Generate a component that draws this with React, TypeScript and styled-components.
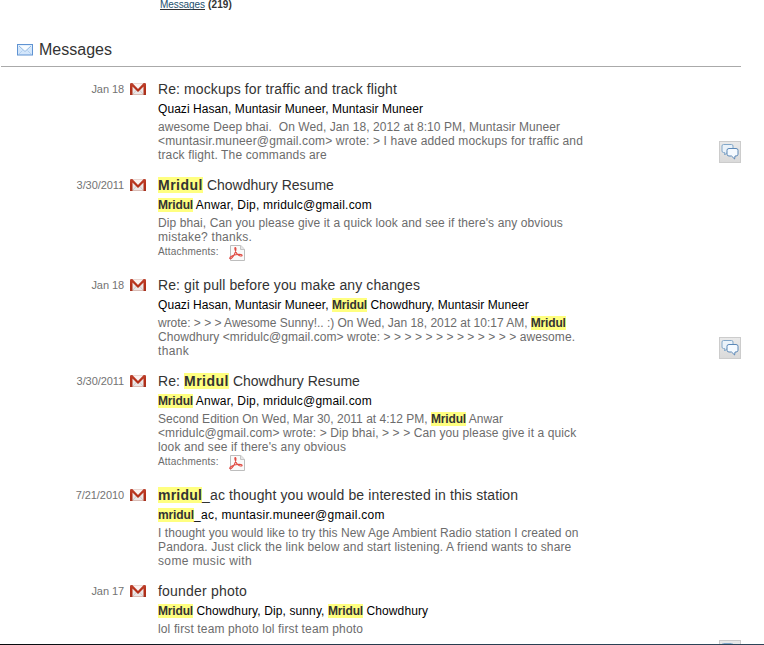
import React from "react";
import styled, { createGlobalStyle } from "styled-components";

const GlobalStyle = createGlobalStyle`
  body {
    margin: 0;
    background: #fff;
    font-family: "Liberation Sans", Arial, sans-serif;
    overflow: hidden;
  }
`;

const Page = styled.div`
  display: flex;
  flex-direction: column;
  height: 645px;
  overflow: hidden;
`;

const Content = styled.main`
  flex: 1;
  min-height: 0;
  overflow: hidden;
`;

const Crumb = styled.div`
  display: flex;
  gap: 3px;
  height: 40px;
  padding-left: 160px;
  box-sizing: border-box;
  font-size: 10px;
  line-height: 10px;
  color: #333;
`;

const CrumbLink = styled.a`
  height: 10px;
  border-bottom: 1px solid #333;
  box-sizing: border-box;
  font-size: 10px;
  letter-spacing: -0.07px;
  color: #24506e;
  text-decoration: none;
`;

const Count = styled.strong`
  letter-spacing: 0.13px;
`;

const Heading = styled.h1`
  display: flex;
  align-items: center;
  gap: 6px;
  width: 740px;
  height: 27px;
  margin: 0 0 12px 1px;
  padding: 0 0 6px 16px;
  box-sizing: border-box;
  border-bottom: 1px solid #aaa;
  color: #333;
  font-size: 16px;
  font-weight: normal;
  line-height: 20px;
`;

const Row = styled.article`
  display: grid;
  grid-template-columns: 124px 16px 500px 22px;
  column-gap: 0;
  padding-bottom: 13px;
`;

const DateLabel = styled.time`
  color: #737373;
  font-size: 11px;
  line-height: 20px;
  letter-spacing: -0.08px;
  text-align: right;
`;

const Source = styled.div`
  padding: 4px 0 0 6px;
  svg {
    display: block;
  }
`;

const Body = styled.div`
  padding-left: 18px;
  white-space: pre;
`;

const Title = styled.h2`
  margin: 0;
  height: 20px;
  color: #333;
  font-size: 14px;
  font-weight: normal;
  line-height: 20px;
`;

const People = styled.div`
  height: 21px;
  color: #000;
  font-size: 12px;
  line-height: 20px;
`;

const SnippetLine = styled.div`
  height: 14px;
  color: #6c6c6c;
  font-size: 12px;
  line-height: 14px;
`;

const Text = styled.span<{ $tracking: number }>`
  letter-spacing: ${(p) => p.$tracking}px;
`;

const Highlight = styled(Text)`
  background: #ffff80;
  color: #333;
  font-weight: bold;
`;

const Attachments = styled.div`
  display: flex;
  gap: 7px;
  height: 18px;
  color: #6c6c6c;
  font-size: 10px;
  line-height: 15px;
  letter-spacing: 0.2px;
  svg {
    margin-top: 1px;
  }
`;

const ChatButton = styled.button<{ $offset: number }>`
  display: grid;
  place-items: center;
  width: 22px;
  height: 22px;
  margin: ${(p) => p.$offset}px 0 -22px 79px;
  padding: 0;
  border: 1px solid #ccc;
  background: linear-gradient(#e9e9e9, #dadada);
`;

const Edge = styled.footer`
  height: 1px;
  background: linear-gradient(90deg, #080a0c, #101820 20%, #26384a 35%, #2d4559);
`;

const Envelope = () => (
  <svg width="16" height="12" viewBox="0 0 16 12">
    <rect x="0.5" y="0.5" width="15" height="10.500" fill="#d3e6fb" stroke="#5f93d2" />
    <path d="M1.500 1.500h13v1L8 8 1.500 2.500z" fill="#f8fcff" />
    <path d="M2 2l6 5.500L14 2" fill="none" stroke="#8eb7e3" />
    <path d="M2 10l3.500-3.500M14 10l-3.500-3.500" fill="none" stroke="#b2d0ef" />
  </svg>
);

const Gmail = () => (
  <svg width="16" height="12" viewBox="0 0 16 12">
    <defs>
      <linearGradient id="mail-red" x1="0" y1="0" x2="0" y2="1">
        <stop offset="0" stopColor="#bd432f" />
        <stop offset="0.500" stopColor="#b52e17" />
        <stop offset="1" stopColor="#a7331f" />
      </linearGradient>
    </defs>
    <rect x="0.5" y="0.5" width="15" height="11" rx="0.7" fill="#ece7e7" stroke="#d9bcb5" />
    <path d="M3 11l4-4.500M13 11L9 6.500" stroke="#cfcaca" fill="none" />
    <path d="M2.500 0.500h11L8 5.500z" fill="#fbf3f2" />
    <path
      d="M0 1.200Q0 0 1.500 0h.8L8 5.900 13.700 0h.8Q16 0 16 1.200V12h-2.500V3.600L8 8.900 2.500 3.600V12H0z"
      fill="url(#mail-red)"
    />
  </svg>
);

const Pdf = () => (
  <svg width="16" height="16" viewBox="0 0 16 16">
    <path d="M1.500 0.500h10.300l3.700 3.700v11.300h-14z" fill="#fafafa" stroke="#bdbdbd" />
    <path d="M11.500 0.500v4h4" fill="#e7e7e7" stroke="#c5c5c5" />
    <path
      d="M6.200 2.500c1.500 0 .6 5-1.700 8.500C3.100 13.200 1 14.500.7 13.400c-.3-1.500 3.900-3.500 7.400-3.900 3.400-.4 5.200.2 5 1-.2 1.200-3.200.3-4.700-1.200C6.500 7.300 5.200 2.500 6.200 2.500z"
      fill="none"
      stroke="#e04a42"
      strokeWidth="1.100"
    />
  </svg>
);

const Bubbles = () => (
  <svg width="18" height="18" viewBox="0 0 18 18">
    <path
      d="M2.500 1.500h8q1.500 0 1.500 1.500v5q0 1.500-1.500 1.500H6L3.700 12V9.500H2.500Q1 9.500 1 8V3q0-1.500 1.500-1.500z"
      fill="#eaf2f9"
      stroke="#82a7c9"
    />
    <path
      d="M8 5.500h7q2 0 2 1.700v4q0 1.800-2 1.800h-1l-.4 3L10.500 13H8q-2 0-2-1.800v-4Q6 5.500 8 5.500z"
      fill="#f5faff"
      stroke="#5b88b7"
    />
  </svg>
);

type Segment = [text: string, tracking: number, highlighted?: boolean];
type Message = {
  date: string;
  title: Segment[];
  people: Segment[];
  snippet: Segment[][];
  attachment?: boolean;
  chatOffset?: number;
};

const name: Segment = ["Mridul", -0.166, true];
const bigName: Segment = ["Mridul", 0.5, true];

const messages: Message[] = [
  {
    date: "Jan 18",
    title: [["Re: mockups for traffic and track flight", 0.107]],
    people: [["Quazi Hasan, Muntasir Muneer, Muntasir Muneer", 0.064]],
    snippet: [
      [["awesome Deep bhai.  On Wed, Jan 18, 2012 at 8:10 PM, Muntasir Muneer", 0.069]],
      [["<muntasir.muneer@gmail.com> wrote: > I have added mockups for traffic and", 0.153]],
      [["track flight. The commands are", 0.142]],
    ],
    chatOffset: 62,
  },
  {
    date: "3/30/2011",
    title: [bigName, [" Chowdhury Resume", 0.01]],
    people: [name, [" Anwar, Dip, mridulc@gmail.com", 0.2]],
    snippet: [
      [["Dip bhai, Can you please give it a quick look and see if there's any obvious", 0.1]],
      [["mistake? thanks.", 0.247]],
    ],
    attachment: true,
  },
  {
    date: "Jan 18",
    title: [["Re: git pull before you make any changes", 0.11]],
    people: [["Quazi Hasan, Muntasir Muneer, ", 0.064], name, [" Chowdhury, Muntasir Muneer", 0.075]],
    snippet: [
      [["wrote: > > > Awesome Sunny!.. :) On Wed, Jan 18, 2012 at 10:17 AM, ", -0.02], name],
      [["Chowdhury <mridulc@gmail.com> wrote: > > > > > > > > > > > > > awesome.", 0.07]],
      [["thank", 0.329]],
    ],
    chatOffset: 62,
  },
  {
    date: "3/30/2011",
    title: [["Re: ", 0.08], bigName, [" Chowdhury Resume", 0.01]],
    people: [name, [" Anwar, Dip, mridulc@gmail.com", 0.2]],
    snippet: [
      [["Second Edition On Wed, Mar 30, 2011 at 4:12 PM, ", 0.013], name, [" Anwar", 0.05]],
      [["<mridulc@gmail.com> wrote: > Dip bhai, > > > Can you please give it a quick", 0.105]],
      [["look and see if there's any obvious", 0.122]],
    ],
    attachment: true,
  },
  {
    date: "7/21/2010",
    title: [["mridul", 0.22, true], ["_ac thought you would be interested in this station", 0.108]],
    people: [["mridul", -0.111, true], ["_ac, muntasir.muneer@gmail.com", 0.285]],
    snippet: [
      [["I thought you would like to try this New Age Ambient Radio station I created on", 0.062]],
      [["Pandora. Just click the link below and start listening. A friend wants to share", 0.142]],
      [["some music with", 0.354]],
    ],
  },
  {
    date: "Jan 17",
    title: [["founder photo", 0.2]],
    people: [name, [" Chowdhury, Dip, sunny, ", 0.113], name, [" Chowdhury", 0.12]],
    snippet: [[["lol first team photo lol first team photo", 0.136]]],
    chatOffset: 59,
  },
];

const Segments = ({ items }: { items: Segment[] }) => (
  <>
    {items.map(([text, tracking, highlighted], i) =>
      highlighted ? (
        <Highlight key={i} $tracking={tracking}>{text}</Highlight>
      ) : (
        <Text key={i} $tracking={tracking}>{text}</Text>
      ),
    )}
  </>
);

const MessageRow = ({ message }: { message: Message }) => (
  <Row>
    <DateLabel>{message.date}</DateLabel>
    <Source><Gmail /></Source>
    <Body>
      <Title><Segments items={message.title} /></Title>
      <People><Segments items={message.people} /></People>
      {message.snippet.map((line, i) => (
        <SnippetLine key={i}><Segments items={line} /></SnippetLine>
      ))}
      {message.attachment && (
        <Attachments>Attachments: <Pdf /></Attachments>
      )}
    </Body>
    {message.chatOffset !== undefined && (
      <ChatButton $offset={message.chatOffset} aria-label="Conversation"><Bubbles /></ChatButton>
    )}
  </Row>
);

export default function App() {
  return (
    <Page>
      <GlobalStyle />
      <Content>
        <Crumb>
          <CrumbLink>Messages</CrumbLink>
          <Count>(219)</Count>
        </Crumb>
        <Heading><Envelope />Messages</Heading>
        {messages.map((message, i) => (
          <MessageRow key={i} message={message} />
        ))}
      </Content>
      <Edge />
    </Page>
  );
}
